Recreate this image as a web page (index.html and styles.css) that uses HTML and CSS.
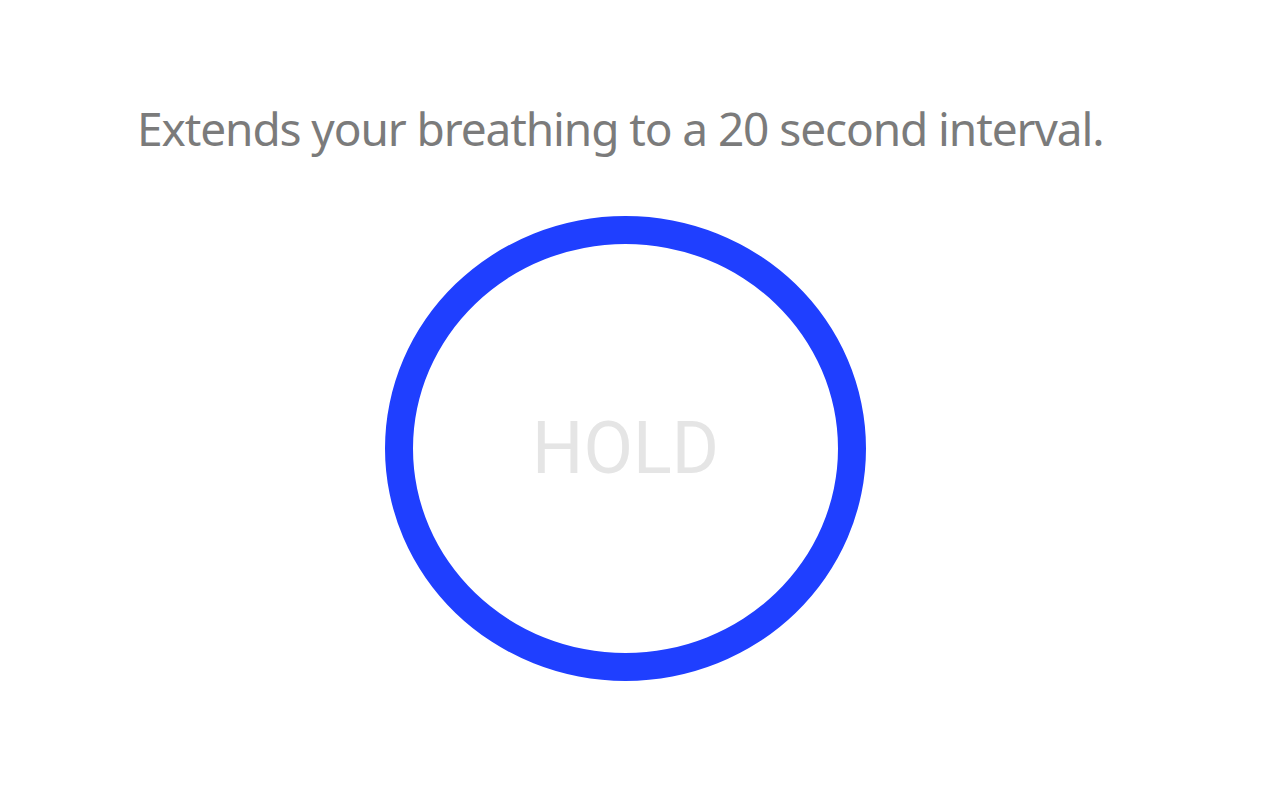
FILE: index.html
```html
<!DOCTYPE html>
<html>
<head>
<meta charset="utf-8">
<link rel="stylesheet" href="styles.css">
</head>
<body>
<main class="page">
  <p class="desc">Extends your breathing to a 20 second interval.</p>
  <div class="ring">
    <span class="label">HOLD</span>
  </div>
</main>
</body>
</html>
```

FILE: styles.css
```css
html, body {
  margin: 0;
  padding: 0;
  background: #ffffff;
}
.page {
  width: 1280px;
  height: 800px;
  display: flex;
  flex-direction: column;
  align-items: flex-start;
}
.desc {
  margin: 96px 0 0 137px;
  font-family: "Noto Sans", sans-serif;
  font-size: 46px;
  letter-spacing: -1.1px;
  line-height: 64px;
  color: #7b7b7b;
  white-space: nowrap;
}
.ring {
  margin: 56px 0 0 385px;
  width: 425px;
  height: 409px;
  border: 28px solid #1f3fff;
  border-radius: 50%;
  display: flex;
  align-items: center;
  justify-content: center;
}
.label {
  font-family: Roboto, sans-serif;
  font-size: 72px;
  color: #e5e5e5;
  line-height: 1;
}
```
